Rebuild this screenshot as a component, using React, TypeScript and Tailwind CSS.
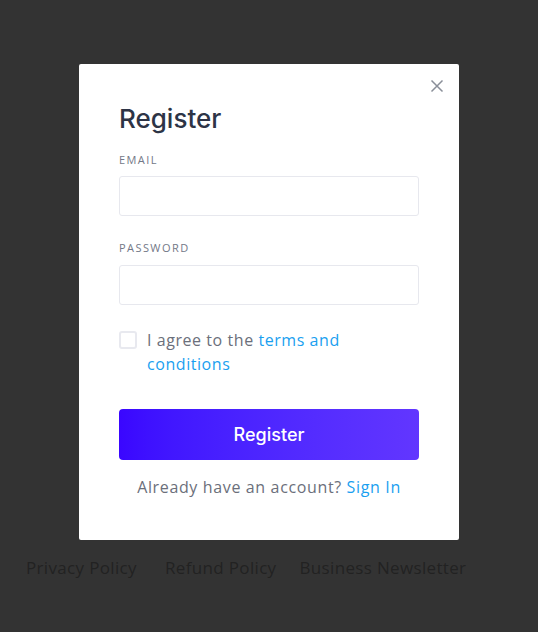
import { useState } from 'react'

const body = { fontFamily: '"Open Sans", "Liberation Sans", sans-serif' }
const heading = { fontFamily: 'Inter, "Open Sans", sans-serif' }

export default function App() {
  const [email, setEmail] = useState('')
  const [password, setPassword] = useState('')
  const [agreed, setAgreed] = useState(false)

  return (
    <div className="relative min-h-screen bg-white" style={body}>
      {/* Page behind the modal */}
      <div className="flex h-[632px] flex-col justify-end pb-[52px]">
        <nav className="flex items-center pl-[26px] text-[17px] tracking-[0.02em] text-[#aaaaaa]">
          <a href="#" className="mr-[28px]">Privacy Policy</a>
          <a href="#" className="mr-[23px]">Refund Policy</a>
          <a href="#">Business Newsletter</a>
        </nav>
      </div>

      {/* Overlay */}
      <div className="fixed inset-0 flex justify-center bg-black/80 pt-[64px]">
        <div className="relative h-[476px] w-[380px] rounded-[2px] bg-white px-[40px] pt-[37px]">
          <button className="absolute right-[14px] top-[14px] text-[#8a8f99]" aria-label="Close">
            <svg width="16" height="16" viewBox="0 0 16 16" fill="none" stroke="currentColor" strokeWidth="1.5">
              <path d="M2.5 2.5l11 11M13.5 2.5l-11 11" />
            </svg>
          </button>

          <h2 className="text-[26px] font-medium leading-[36px] text-[#2d3446]" style={heading}>
            Register
          </h2>

          <form onSubmit={(e) => e.preventDefault()} className="mt-[15px]">
            <label className="block text-[11px] uppercase leading-[16px] tracking-[0.13em] text-[#737887]">
              Email
            </label>
            <input
              type="email"
              value={email}
              onChange={(e) => setEmail(e.target.value)}
              className="mt-[8px] block h-[40px] w-full rounded-[3px] border border-[#e7e8ee] px-3 text-[15px] text-[#2d3446] outline-none"
            />

            <label className="mt-[24px] block text-[11px] uppercase leading-[16px] tracking-[0.13em] text-[#737887]">
              Password
            </label>
            <input
              type="password"
              value={password}
              onChange={(e) => setPassword(e.target.value)}
              className="mt-[9px] block h-[40px] w-full rounded-[3px] border border-[#e7e8ee] px-3 text-[15px] text-[#2d3446] outline-none"
            />

            <div className="mt-[23px] flex items-start gap-[10px]">
              <button
                type="button"
                onClick={() => setAgreed(!agreed)}
                className="mt-[3px] h-[18px] w-[18px] shrink-0 rounded-[3px] border-2 border-[#e8e9ef] bg-white"
              />
              <p className="w-[210px] text-[16px] leading-[24px] tracking-[0.035em] text-[#6b6f7b]">
                I agree to the{' '}
                <a href="#" className="text-[#1a9ff0]">terms and conditions</a>
              </p>
            </div>

            <button
              type="submit"
              className="mt-[33px] flex h-[51px] w-full items-center justify-center rounded-[4px] bg-gradient-to-r from-[#3a06ff] to-[#6236ff] text-[18px] font-medium text-white"
              style={heading}
            >
              Register
            </button>

            <p className="mt-[15px] text-center text-[16px] leading-[24px] tracking-[0.04em] text-[#6b6f7b]">
              Already have an account?{' '}
              <a href="#" className="text-[#1a9ff0]">Sign In</a>
            </p>
          </form>
        </div>
      </div>
    </div>
  )
}
